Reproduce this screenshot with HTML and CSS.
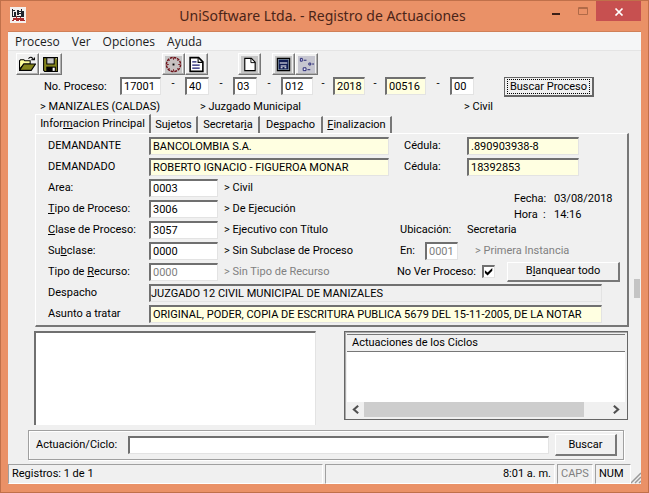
FILE: index.html
```html
<!DOCTYPE html>
<html lang="es">
<head>
<meta charset="utf-8">
<title>UniSoftware Ltda. - Registro de Actuaciones</title>
<link rel="stylesheet" href="styles.css">
</head>
<body>
<div class="window">
  <header class="titlebar">
    <svg class="app-icon" viewBox="0 0 16 16" shape-rendering="crispEdges" aria-hidden="true">
      <path fill="#f4f0ee" d="M0 0h16v16H0z"/>
      <path fill="#20242c" d="M2 2h1v7H2zM3 3h2v1H3zM4 5h2v4H4zM7 3h2v5H7zM9 4h2v1H9zM11 2h1v8h-1zM12 4h2v5h-2zM2 9h12v1H2zM7 6h4v1H7z"/>
      <path fill="#a92c2c" d="M3 11h11v2H3zM2 13h13v1H2zM6 9h1v2H6zM10 10h1v1h-1z"/>
      <path fill="#fff" d="M4 13h2v1H4zM9 13h1v1H9z"/>
    </svg>
    <h1>UniSoftware Ltda. - Registro de Actuaciones</h1>
    <div class="caption-buttons">
      <button class="caption" type="button" aria-label="Minimizar"><svg viewBox="0 0 10 10"><path fill="#3c2018" d="M1 7h8v2H1z"/></svg></button>
      <button class="caption" type="button" aria-label="Maximizar" disabled><svg viewBox="0 0 10 10"><path fill="none" stroke="#b06a48" d="M.5 1.500h9v7h-9zM.5 2.500h9"/></svg></button>
      <button class="caption close" type="button" aria-label="Cerrar"><svg viewBox="0 0 10 10"><path fill="none" stroke="#fff" stroke-width="1.700" d="M1.500 2.500l7 7M8.500 2.500l-7 7"/></svg></button>
    </div>
  </header>

  <div class="client">
    <nav class="menu">
      <a href="#">Proceso</a><a href="#">Ver</a><a href="#">Opciones</a><a href="#">Ayuda</a>
    </nav>

    <div class="toolbar">
      <div class="tools tools-file">
        <button class="tool" type="button" aria-label="Abrir"><svg viewBox="0 0 16 16">
          <path fill="#ffff9c" stroke="#000" d="M.5 12.500v-8l1-1h3l1 1h5v3h-6z"/>
          <path fill="#84841c" stroke="#000" d="M.5 13.500l4-6h11l-4 6z"/>
          <path fill="none" stroke="#000" d="M9 2.500c1-2 4-1.500 4.500 1M11.500 3.500h3v-2"/></svg></button>
        <button class="tool" type="button" aria-label="Guardar"><svg viewBox="0 0 16 16">
          <path fill="#84841c" stroke="#000" d="M1.500 1.500h13v13h-12l-1-1z"/>
          <path fill="#c8c8c8" stroke="#000" d="M4.500 1.500h7v6h-7z"/>
          <path d="M4 10h9v5H4z"/><path fill="#fff" d="M10 11h2v3h-2z"/><path fill="#ddd" d="M13 2h1v1h-1z"/></svg></button>
      </div>
      <div class="tools tools-view">
        <button class="tool" type="button" aria-label="Términos"><svg viewBox="0 0 18 18">
          <path fill="#c6c6c6" d="M0 0h18v18H0z"/>
          <circle cx="9" cy="9" r="7.500" fill="#c6c0c0" stroke="#6c1018" stroke-width="1.500" stroke-dasharray="3 .9"/>
          <path fill="none" stroke="#7c1c24" d="M9 2v2M9 14v2M2 9h2M14 9h2M4 4l1 1M13 13l1 1M14 4l-1 1M5 13l-1 1"/><path d="M8 8h2v2H8z"/></svg></button>
        <button class="tool" type="button" aria-label="Documento"><svg viewBox="0 0 16 16">
          <path fill="#fff" stroke="#000" stroke-width="1.500" d="M2 1.500h8l4 4v9H2z"/>
          <path fill="none" stroke="#000" d="M9.500 2v4H14"/><path fill="none" stroke="#18186c" stroke-width="1.200" d="M4 5.500h4M4 8.500h7M4 11.500h7"/></svg></button>
      </div>
      <div class="tools tools-new">
        <button class="tool" type="button" aria-label="Nuevo"><svg viewBox="0 0 18 18">
          <path fill="#c6c6c6" d="M0 0h18v18H0z"/>
          <path fill="#fff" stroke="#000" stroke-width="1.200" d="M4 2.500h7l4 4v9H4z"/><path fill="none" stroke="#000" d="M10.500 3v4H15"/></svg></button>
      </div>
      <div class="tools">
        <button class="tool" type="button" aria-label="Calendario"><svg viewBox="0 0 18 18">
          <path fill="#c6c6c6" d="M0 0h18v18H0z"/><path fill="#7c8c9c" stroke="#000" stroke-width="1.200" d="M2.500 2.500h13v13h-13z"/>
          <path fill="#101c54" d="M4 4h10v10H4z"/><path fill="#fff" d="M5 7h8v1H5zM6 10h6v1H6zM6 12h2v1H6zM10 12h2v1h-2z"/></svg></button>
        <button class="tool" type="button" aria-label="Ciclos"><svg viewBox="0 0 18 18">
          <path fill="#c6c6d0" d="M0 0h18v18H0z"/><path fill="#eef" stroke="#202070" d="M2.500 2.500h2v3h-2zM11.500 7.500h2v2h-2zM5.500 12.500h3v3h-3z"/>
          <path fill="none" stroke="#202070" d="M6 4.500h3M15 8.500h2M10 14.500h3"/></svg></button>
      </div>
    </div>

    <div class="case-row">
      <label for="n1">No. Proceso:</label>
      <input class="box n5" id="n1" value="17001"><span>-</span>
      <input class="box n2" aria-label="Entidad" value="40"><span>-</span>
      <input class="box n2" aria-label="Especialidad" value="03"><span>-</span>
      <input class="box n3" aria-label="Despacho número" value="012"><span class="near">-</span>
      <input class="box n3 cream" aria-label="Año" value="2018"><span class="near">-</span>
      <input class="box n5 cream" aria-label="Consecutivo" value="00516"><span>-</span>
      <input class="box n2" aria-label="Recurso" value="00">
      <button class="button default" type="button"><span>Buscar Proceso</span></button>
    </div>

    <div class="court-row"><span>&gt; MANIZALES (CALDAS)</span><span>&gt; Juzgado Municipal</span><span>&gt; Civil</span></div>

    <div class="tabs" role="tablist">
      <button class="tab active" role="tab" aria-selected="true" type="button">Infor<u>m</u>acion Principal</button>
      <button class="tab t1" role="tab" type="button">Su<u>j</u>etos</button>
      <button class="tab t2" role="tab" type="button">Secretar<u>i</u>a</button>
      <button class="tab t3" role="tab" type="button">De<u>s</u>pacho</button>
      <button class="tab t4" role="tab" type="button"><u>F</u>inalizacion</button>
    </div>

    <div class="workspace">
      <section class="panel">
        <div class="columns">
          <div class="left">
            <label for="dte">DEMANDANTE</label><input class="box cream wide" id="dte" value="BANCOLOMBIA S.A.">
            <label for="ddo">DEMANDADO</label><input class="box cream wide" id="ddo" value="ROBERTO IGNACIO - FIGUEROA MONAR">
            <label for="area">Area:</label><input class="box" id="area" value="0003"><span>&gt; Civil</span>
            <label for="tipo"><u>T</u>ipo de Proceso:</label><input class="box" id="tipo" value="3006"><span>&gt; De Ejecución</span>
            <label for="clase"><u>C</u>lase de Proceso:</label><input class="box" id="clase" value="3057"><span>&gt; Ejecutivo con Título</span>
            <label for="sub">Su<u>b</u>clase:</label><input class="box" id="sub" value="0000"><span>&gt; Sin Subclase de Proceso</span>
            <label for="rec">Tipo de <u>R</u>ecurso:</label><input class="box" id="rec" value="0000" disabled><span class="dim">&gt; Sin Tipo de Recurso</span>
          </div>
          <div class="right">
            <div class="line"><label class="card" for="c1">Cédula:</label><input class="box cream id" id="c1" value=".890903938-8"></div>
            <div class="line"><label class="card" for="c2">Cédula:</label><input class="box cream id" id="c2" value="18392853"></div>
            <dl class="stamp"><dt>Fecha:</dt><dd>03/08/2018</dd><dt>Hora &nbsp;:</dt><dd>14:16</dd></dl>
            <div class="line"><span class="name">Ubicación:</span><span>Secretaria</span></div>
            <div class="line"><label class="short" for="en">En:</label><input class="box inst" id="en" value="0001" disabled><span class="dim">&gt; Primera Instancia</span></div>
            <div class="line"><label class="tick-label" for="nover">No Ver Proceso:</label><input class="tick" type="checkbox" id="nover" checked><button class="button clear" type="button">B<u>l</u>anquear todo</button></div>
          </div>
        </div>
        <div class="full">
          <label for="desp">Despacho</label><input class="box plain" id="desp" value="JUZGADO 12 CIVIL MUNICIPAL DE MANIZALES" readonly>
          <label for="asu">Asunto a tratar</label><input class="box cream" id="asu" value="ORIGINAL, PODER, COPIA DE ESCRITURA PUBLICA 5679 DEL 15-11-2005, DE LA NOTAR">
        </div>
      </section>
      <div class="rail"><div class="rail-thumb"></div></div>
    </div>

    <div class="lists">
      <div class="list"></div>
      <section class="cycles">
        <h2>Actuaciones de los Ciclos</h2>
        <div class="cycles-body"></div>
        <div class="hscroll">
          <svg viewBox="0 0 16 14"><path fill="none" stroke="#505050" stroke-width="2" d="M10.500 3.500L6.500 7l4 3.500"/></svg>
          <div class="track"><div class="thumb"></div></div>
          <svg viewBox="0 0 16 14"><path fill="none" stroke="#505050" stroke-width="2" d="M5.500 3.500l4 3.500-4 3.500"/></svg>
        </div>
      </section>
    </div>

    <form class="search">
      <label for="q">Actuación/Ciclo:</label><input class="box" id="q"><button class="button find" type="button">Buscar</button>
    </form>

    <footer class="status">
      <span class="cell records">Registros: 1 de 1</span>
      <span class="cell clock">8:01 a. m.</span>
      <span class="cell key dim">CAPS</span>
      <span class="cell key">NUM</span>
      <svg class="grip" viewBox="0 0 10 12"><path fill="none" stroke="#999" stroke-width="1.500" d="M0 11L10 1M4 11l6-6M8 11l2-2"/></svg>
    </footer>
  </div>
</div>
</body>
</html>
```

FILE: styles.css
```css
* { box-sizing: border-box; }

body {
  margin: 0;
  font: 11px/14px Roboto, "Liberation Sans", sans-serif;
  color: #000;
}

input, button { font: inherit; color: inherit; margin: 0; min-width: 0; }
svg { display: block; }
.dim { color: #808080; }

.window {
  min-height: 100vh;
  padding: 0 7px 8px;
  background: #ea9167;
  border: 1px solid #c0704a;
  display: flex;
  flex-direction: column;
}

/* Title bar */
.titlebar {
  height: 30px;
  display: grid;
  grid-template-columns: 97px 1fr 101px;
  align-items: start;
}
.app-icon { width: 16px; height: 16px; margin: 6px 0 0 2px; }
.titlebar h1 {
  margin: 4px 0 0;
  font: 14px/22px "Noto Sans", sans-serif;
  color: #4a2418;
  text-align: center;
  white-space: nowrap;
}
.caption-buttons { display: flex; justify-content: flex-end; }
.caption {
  width: 27px;
  height: 20px;
  padding: 0;
  border: 0;
  background: none;
  display: grid;
  place-items: center;
}
.caption svg { width: 10px; height: 10px; }
.close { width: 45px; background: #c75050; }

.client {
  flex: 1;
  background: #f0f0f0;
  border-top: 1px solid #d08058;
  display: flex;
  flex-direction: column;
}

.menu {
  height: 19px;
  padding-left: 7px;
  display: flex;
  gap: 12px;
  background: #f5f6f7;
  border-bottom: 1px solid #e4e4e4;
  font: 12px/19px "Open Sans", sans-serif;
}
.menu a { color: #1c1c1c; text-decoration: none; }

/* Toolbar */
.toolbar { display: flex; padding: 2px 8px 0; }
.tools { display: flex; }
.tools-file { margin-right: 100px; }
.tools-view { margin-right: 30px; }
.tools-new { margin-right: 11px; }
.tool {
  width: 23px;
  height: 22px;
  padding: 1px;
  background: #f0f0f0;
  border: 1px solid;
  border-color: #fff #777 #777 #fff;
  box-shadow: inset -1px -1px #b0b0b0;
  display: grid;
  place-items: center;
}
.tool svg { width: 17px; height: 17px; }

/* Sunken fields and raised buttons */
.box {
  height: 18px;
  padding: 0 2px;
  background: #fff;
  border: solid;
  border-width: 2px 1px 1px 2px;
  border-color: #707070 #e3e3e3 #e3e3e3 #707070;
  border-radius: 0;
  outline: 0;
}
.box:disabled { color: #808080; }
.cream { background: #ffffe1; }
.plain { background: #f0f0f0; padding: 0; }

.button {
  height: 20px;
  padding: 0;
  background: #f0f0f0;
  border: solid;
  border-width: 1px 2px 2px 1px;
  border-color: #fff #787878 #787878 #fff;
}

.case-row {
  display: flex;
  align-items: flex-start;
  padding: 2px 0 0 36px;
  height: 24px;
}
.case-row label { width: 76px; padding-top: 3px; }
.case-row > span { width: 24px; text-align: center; line-height: 14px; }
.case-row > .near { width: 20px; }
.n5 { width: 41px; }
.n2 { width: 24px; }
.n3 { width: 32px; }
.default {
  width: 90px;
  margin-left: 30px;
  border-color: #666;
  padding: 1px 2px;
}
.default span { display: block; border: 1px dotted #000; line-height: 13px; }

.court-row {
  display: grid;
  grid-template-columns: 160px 264px 1fr;
  padding: 1px 0 0 32px;
  line-height: 14px;
}

/* Tabs */
.tabs { display: flex; align-items: flex-end; height: 19px; margin: 0 0 0 27px; }
.tab {
  height: 17px;
  padding: 0;
  background: none;
  border: 0;
  border-top: 1px solid #fff;
  border-right: 2px solid #777;
}
.active { width: 116px; height: 19px; border-left: 1px solid #fff; }
.t1 { width: 47px; }
.t2 { width: 62px; }
.t3 { width: 63px; }
.t4 { width: 69px; }

.workspace { display: flex; }
.panel {
  flex: 1;
  min-width: 0;
  margin-left: 27px;
  padding: 1px 7px 1px 12px;
  border: solid;
  border-width: 1px 2px 2px 1px;
  border-color: #fff #777 #777 #fff;
}
.columns { display: flex; }
.left {
  flex: 1;
  display: grid;
  grid-template-columns: 101px 69px 171px;
  grid-auto-rows: 21px;
  align-items: center;
}
.left .wide { grid-column: 2 / 4; }
.left span { padding-left: 6px; white-space: nowrap; }
.right { width: 220px; }
.line { display: flex; align-items: center; height: 21px; white-space: nowrap; }
.line label, .name { width: 67px; flex: none; }
.line .card { padding-left: 4px; }
.id { width: 112px; }
.stamp {
  height: 42px;
  margin: 0;
  padding: 14px 0 0 114px;
  display: grid;
  grid-template-columns: 40px 1fr;
  grid-auto-rows: 16px;
  line-height: 16px;
}
.stamp dd { margin: 0; white-space: nowrap; }
.line .short { width: 25px; }
.inst { width: 33px; margin-right: 17px; }
.line .tick-label { width: 85px; margin-left: -3px; }
.clear { flex: 1; margin-left: 12px; }

.tick {
  appearance: none;
  width: 13px;
  height: 13px;
  background: #fff;
  border: solid;
  border-width: 2px 1px 1px 2px;
  border-color: #707070 #e3e3e3 #e3e3e3 #707070;
}
.tick:checked::before {
  content: "";
  display: block;
  width: 9px;
  height: 9px;
  background: #000;
  clip-path: polygon(10% 35%, 40% 62%, 92% 10%, 92% 42%, 40% 95%, 10% 67%);
}

.full {
  display: grid;
  grid-template-columns: 101px 1fr;
  grid-auto-rows: 21px;
  align-items: center;
  margin-right: 18px;
}

.rail { width: 12px; padding: 146px 1px 0 5px; }
.rail-thumb { height: 19px; background: #c4c4c4; }

/* Lower lists */
.lists {
  display: grid;
  grid-template-columns: 282px 1fr;
  gap: 28px;
  margin: 4px 13px 0 26px;
  align-items: start;
}
.list {
  height: 94px;
  background: #fff;
  border: solid;
  border-width: 2px 1px 0 2px;
  border-color: #707070 #e3e3e3 #e3e3e3 #707070;
}
.cycles {
  border: 1px solid #666;
  box-shadow: inset 1px 1px #aaa;
  padding: 2px;
}
.cycles h2 {
  margin: 0;
  padding-left: 5px;
  font: inherit;
  line-height: 16px;
  border-top: 1px solid #777;
  border-bottom: 1px solid #777;
  background: #f0f0f0;
}
.cycles-body { height: 50px; background: #fff; }
.hscroll { display: flex; height: 15px; background: #f0f0f0; }
.hscroll svg { width: 17px; height: 15px; }
.track { flex: 1; }
.thumb { width: 90%; height: 15px; background: #cdcdcd; }

.search {
  display: flex;
  align-items: center;
  height: 30px;
  margin: 5px 17px 4px 20px;
  padding: 0 6px 0 7px;
  border: 1px solid #a0a0a0;
  box-shadow: inset 1px 1px #fff, 1px 1px #fff;
}
.search label { width: 92px; }
.search .box { flex: 1; }
.find { width: 62px; height: 22px; margin-left: 6px; }

/* Status bar */
.status { display: flex; gap: 2px; height: 20px; margin-top: auto; }
.cell {
  padding: 0 3px;
  line-height: 18px;
  border: 1px solid;
  border-color: #a0a0a0 #fff #fff #a0a0a0;
}
.records { width: 315px; }
.clock { flex: 1; text-align: right; }
.key { width: 36px; }
.grip { width: 10px; height: 12px; align-self: flex-end; margin-left: -2px; }
```
